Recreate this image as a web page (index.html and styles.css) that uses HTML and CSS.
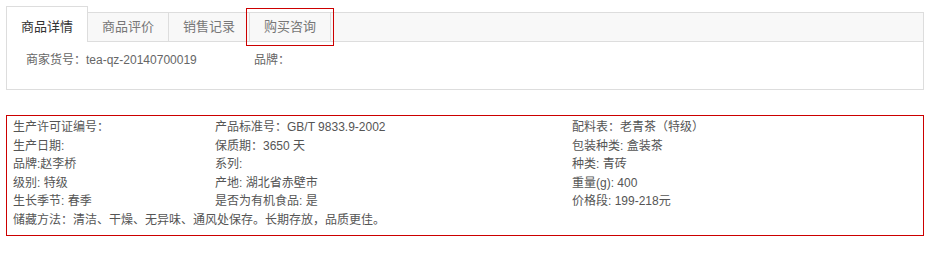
FILE: index.html
```html
<!DOCTYPE html>
<html lang="zh-CN">
<head>
  <meta charset="UTF-8">
  <title>商品详情</title>
  <link rel="stylesheet" href="styles.css">
</head>
<body>
  <div class="page">
    <div class="tab-box">
      <div class="tab-bar">
        <div class="tab active">商品详情</div>
        <div class="tab">商品评价</div>
        <div class="tab">销售记录</div>
        <div class="tab marked">购买咨询</div>
      </div>
      <div class="tab-content">
        <span class="attr-main">商家货号：tea-qz-20140700019</span>
        <span>品牌：</span>
      </div>
    </div>

    <div class="spec-box">
      <div class="spec-grid">
        <div>生产许可证编号：</div>
        <div>产品标准号：GB/T 9833.9-2002</div>
        <div>配料表：老青茶（特级）</div>

        <div>生产日期:</div>
        <div>保质期：3650 天</div>
        <div>包装种类: 盒装茶</div>

        <div>品牌:赵李桥</div>
        <div>系列:</div>
        <div>种类: 青砖</div>

        <div>级别: 特级</div>
        <div>产地: 湖北省赤壁市</div>
        <div>重量(g): 400</div>

        <div>生长季节: 春季</div>
        <div>是否为有机食品: 是</div>
        <div>价格段: 199-218元</div>

        <div class="wide">储藏方法：清洁、干燥、无异味、通风处保存。长期存放，品质更佳。</div>
      </div>
    </div>
  </div>
</body>
</html>
```

FILE: styles.css
```css
body {
  margin: 0;
  background: #fff;
  font-family: "Liberation Sans", "Noto Sans CJK SC", sans-serif;
  font-size: 12px;
  color: #555;
}

.page {
  padding: 12px 6px 0;
}

/* tabs */
.tab-box {
  border: 1px solid #ddd;
}

.tab-bar {
  display: flex;
  height: 28px;
  background: #f8f8f8;
  border-bottom: 1px solid #ddd;
}

.tab {
  position: relative;
  padding: 0 14px;
  border-right: 1px solid #ddd;
  font-size: 13px;
  line-height: 28px;
  color: #777;
}

.tab.active {
  margin: -7px 0 -1px -1px;
  height: 36px;
  line-height: 36px;
  padding-top: 2px;
  box-sizing: border-box;
  background: #fff;
  border: 1px solid #ddd;
  border-bottom: none;
  color: #333;
}

.tab.marked::after {
  content: "";
  position: absolute;
  top: -5px;
  right: -4px;
  bottom: -5px;
  left: -4px;
  border: 1px solid #c00;
}

.tab-content {
  display: flex;
  height: 47px;
  padding: 9px 19px 0;
  box-sizing: border-box;
  line-height: 18px;
  color: #666;
}

.attr-main {
  width: 228px;
}

/* spec list */
.spec-box {
  margin-top: 25px;
  border: 1px solid #c00;
  padding: 2px 6px 5px;
}

.spec-grid {
  display: grid;
  grid-template-columns: 202px 357px 1fr;
  line-height: 18.6px;
  color: #555;
}

.spec-grid .wide {
  grid-column: 1 / -1;
}
```
